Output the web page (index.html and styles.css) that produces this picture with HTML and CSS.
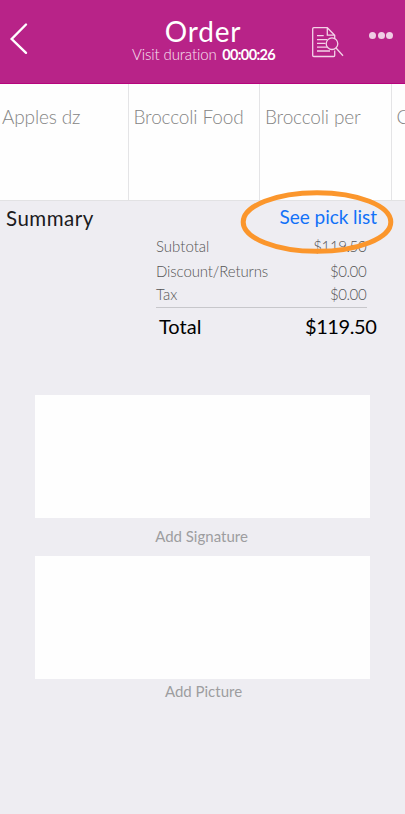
FILE: index.html
```html
<!DOCTYPE html>
<html lang="en">
<head>
<meta charset="utf-8">
<title>Order</title>
<link rel="stylesheet" href="styles.css">
</head>
<body>
<header class="bar">
  <svg class="back" width="40" height="40" viewBox="0 0 40 40"><path d="M26 4.500 11.700 19 26 32.800"/></svg>
  <div class="heading">
    <h1><span>Order</span></h1>
    <p><span class="visit">Visit duration</span><b>00:00:26</b></p>
  </div>
  <svg class="doc" width="34" height="34" viewBox="0 0 34 34">
    <path d="M24.700 15V10.200L17.300 2.700H3.800Q2.700 2.700 2.700 3.800V30.400Q2.700 31.500 3.800 31.500H23.600Q24.700 31.500 24.700 30.400V25.500M17.300 2.700V10.200H24.700"/>
    <path d="M7 10.700H13.700M7 14.700H17M7 18.300H15.500M7 22.200H17M7 26H20"/>
    <circle cx="22" cy="18.700" r="5.800"/>
    <path d="M26 23 33 30.800"/>
  </svg>
  <div class="more"><i></i><i></i><i></i></div>
</header>
<section class="products">
  <div class="product"><span>Apples dz</span></div>
  <div class="product"><span>Broccoli Food</span></div>
  <div class="product"><span>Broccoli per</span></div>
  <div class="product"><span>C</span></div>
</section>
<main>
  <div class="summary">
    <h2><span>Summary</span></h2>
    <a><span>See pick list</span>
      <svg class="ring" width="156" height="68" viewBox="0 0 156 68"><ellipse cx="78" cy="34" rx="73.800" ry="29.300"/></svg>
    </a>
  </div>
  <div class="amounts">
    <div class="row"><span>Subtotal</span><span class="value">$119.50</span></div>
    <div class="row disc"><span class="returns">Discount/Returns</span><span class="value">$0.00</span></div>
    <div class="row"><span>Tax</span><span class="value">$0.00</span></div>
  </div>
  <div class="total"><span>Total</span><span class="grand">$119.50</span></div>
  <div class="box"></div>
  <p class="caption sign"><span>Add Signature</span></p>
  <div class="box"></div>
  <p class="caption pic"><span>Add Picture</span></p>
</main>
</body>
</html>
```
FILE: styles.css
```css
* { box-sizing: border-box; }
body {
  margin: 0;
  width: 405px;
  height: 814px;
  overflow: hidden;
  background: #eeedf2;
  font-family: Lato, "Liberation Sans", sans-serif;
  color: #1b1b1d;
}
h1, h2, p { margin: 0; font-weight: 400; white-space: nowrap; }
.bar {
  display: flex;
  height: 84px;
  background: #b82388;
  border-bottom: 1px solid #b6047d;
  color: #fff;
}
svg { fill: none; }
.back { margin-top: 20px; stroke: #fff; stroke-width: 2.4; stroke-linecap: round; flex: none; }
.heading { width: 143px; margin-left: 92px; padding-top: 14px; text-align: center; flex: none; }
.heading h1 { font-size: 28px; line-height: 34px; letter-spacing: 0.8px; padding-right: 1px; }
.heading p { display: flex; justify-content: space-between; align-items: baseline; font-size: 15px; line-height: 14px; margin-top: -1px; }
.visit { font-weight: 300; color: #f9e4f2; letter-spacing: -0.1px; }
.heading b { font-size: 14.500px; letter-spacing: -0.65px; margin-right: 0; }
.doc { margin: 25px 0 0 35px; stroke: #f3d3e8; stroke-width: 1.3; flex: none; }
.doc circle { fill: #b82388; }
.more { display: flex; gap: 1.500px; margin: 32px 0 0 25px; }
.more i { width: 7px; height: 7px; border-radius: 50%; background: #f0cde5; }
.products {
  display: grid;
  grid-template-columns: 128.500px 131.500px 131.500px 1fr;
  height: 117px;
  overflow: hidden;
  background: #fefefe;
  border-bottom: 1px solid #e2e2e4;
}
.product {
  padding: 21px 0 0 5px;
  border-right: 1px solid #e4e4e6;
  font-size: 19px;
  line-height: 24px;
  font-weight: 300;
  letter-spacing: -0.15px;
  color: #858585;
  white-space: nowrap;
}
.product:first-child { padding-left: 2px; }
.product:last-child { border: 0; }
.summary { display: flex; justify-content: space-between; height: 35px; padding: 0 28px 0 6px; line-height: 24px; }
.summary h2 { font-size: 20.500px; padding-top: 5px; line-height: 24px; letter-spacing: 0.5px; }
.summary a { position: relative; padding-top: 4px; font-size: 19px; color: #1271f8; white-space: nowrap; letter-spacing: -0.05px; }
.ring { position: absolute; right: -18px; top: -13px; stroke: #fb962c; stroke-width: 5; }
.amounts { width: 211px; height: 72px; margin-left: 156px; border-bottom: 1.500px solid #c7c7cb; font-size: 15px; font-weight: 300; color: #555; }
.row { display: flex; justify-content: space-between; height: 23px; line-height: 20px; }
.disc { height: 25px; padding-top: 2px; }
.returns { letter-spacing: -0.12px; }
.value { letter-spacing: -0.4px; margin-right: 0.8px; }
.total { display: flex; justify-content: space-between; margin: 7px 28px 56px 159px; height: 24px; line-height: 23px; font-size: 20px; color: #000; }
.grand { letter-spacing: -0.4px; margin-right: 0.5px; }
.box { width: 335px; height: 123px; margin-left: 35px; background: #fefefe; }
.caption { color: #9d9da0; font-size: 15px; line-height: 20px; text-align: center; }
.sign { height: 38px; padding-top: 8px; padding-right: 2px; }
.pic { padding-top: 2px; padding-left: 2px; }
```
